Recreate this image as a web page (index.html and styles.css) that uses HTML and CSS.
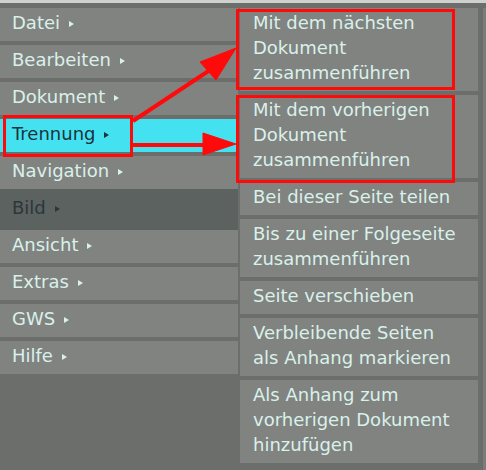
FILE: index.html
```html
<!DOCTYPE html>
<html lang="de">
<head>
    <meta charset="UTF-8">
    <meta name="viewport" content="width=device-width, initial-scale=1.0">
    <title>Menü Trennung</title>
    <link rel="stylesheet" href="styles.css">
</head>
<body>
    <div class="topbar"></div>
    <div class="menus">
        <!-- Hauptmenü -->
        <ul class="menu main-menu">
            <li>Datei <span class="arrow"></span></li>
            <li>Bearbeiten <span class="arrow"></span></li>
            <li>Dokument <span class="arrow"></span></li>
            <li class="active">Trennung <span class="arrow"></span></li>
            <li>Navigation <span class="arrow"></span></li>
            <li class="disabled">Bild <span class="arrow"></span></li>
            <li>Ansicht <span class="arrow"></span></li>
            <li>Extras <span class="arrow"></span></li>
            <li>GWS <span class="arrow"></span></li>
            <li>Hilfe <span class="arrow"></span></li>
        </ul>
        <!-- Untermenü Trennung -->
        <ul class="menu sub-menu">
            <li>Mit dem nächsten<br>Dokument<br>zusammenführen</li>
            <li>Mit dem vorherigen<br>Dokument<br>zusammenführen</li>
            <li>Bei dieser Seite teilen</li>
            <li>Bis zu einer Folgeseite<br>zusammenführen</li>
            <li>Seite verschieben</li>
            <li>Verbleibende Seiten<br>als Anhang markieren</li>
            <li>Als Anhang zum<br>vorherigen Dokument<br>hinzufügen</li>
        </ul>
        <div class="edge"></div>
    </div>

    <!-- Markierungen -->
    <svg class="notes" width="486" height="470" viewBox="0 0 486 470">
        <g fill="none" stroke="#ff0a0a" stroke-width="3">
            <rect x="4.5" y="116.5" width="127" height="39"/>
            <rect x="237.5" y="10.5" width="216" height="78"/>
            <rect x="237.5" y="96.5" width="216" height="85"/>
        </g>
        <g fill="#ff0a0a" stroke="#ff0a0a">
            <line x1="133" y1="121" x2="210" y2="70" stroke-width="4"/>
            <polygon points="236,48 200,62 216,80" stroke-width="1"/>
            <line x1="132" y1="145" x2="206" y2="145" stroke-width="4"/>
            <polygon points="203,133 236,144 203,155" stroke-width="1"/>
        </g>
    </svg>
</body>
</html>
```

FILE: styles.css
```css
body {
    margin: 0;
    width: 486px;
    height: 470px;
    overflow: hidden;
    background-color: #676967;
    font-family: 'DejaVu Sans', 'Verdana', sans-serif;
    font-size: 18px;
    color: #d9f1ea;
    position: relative;
}
.topbar {
    height: 3px;
    background: #cfd1cf;
}
.menus {
    display: flex;
    gap: 2px;
    padding-top: 5px;
    background: #6c6e6c;
    height: 462px;
}
.menu {
    list-style: none;
    margin: 0;
    padding: 0;
    display: flex;
    flex-direction: column;
    gap: 4px;
}
.menu li {
    background: #818381;
    line-height: 25px;
    padding: 2px 0 6px 13px;
    white-space: nowrap;
}
.main-menu {
    width: 238px;
}
.main-menu li {
    padding-left: 12px;
}
.main-menu li.active {
    background: #44e2f0;
    color: #1d323c;
}
.main-menu li.disabled {
    background: #5c625f;
    color: #2b373a;
    margin: -4px 0;
    padding-top: 6px;
    padding-bottom: 10px;
}
.sub-menu {
    width: 238px;
}
.arrow {
    display: inline-block;
    width: 0;
    height: 0;
    margin-left: 3px;
    vertical-align: 2px;
    border-left: 5px solid currentColor;
    border-top: 3px solid transparent;
    border-bottom: 3px solid transparent;
}
.edge {
    flex: 1;
    margin-left: 1px;
    background: #7b7d7b;
    border-left: 2px solid #6a6c6a;
}
.notes {
    position: absolute;
    top: 0;
    left: 0;
    pointer-events: none;
}
```
